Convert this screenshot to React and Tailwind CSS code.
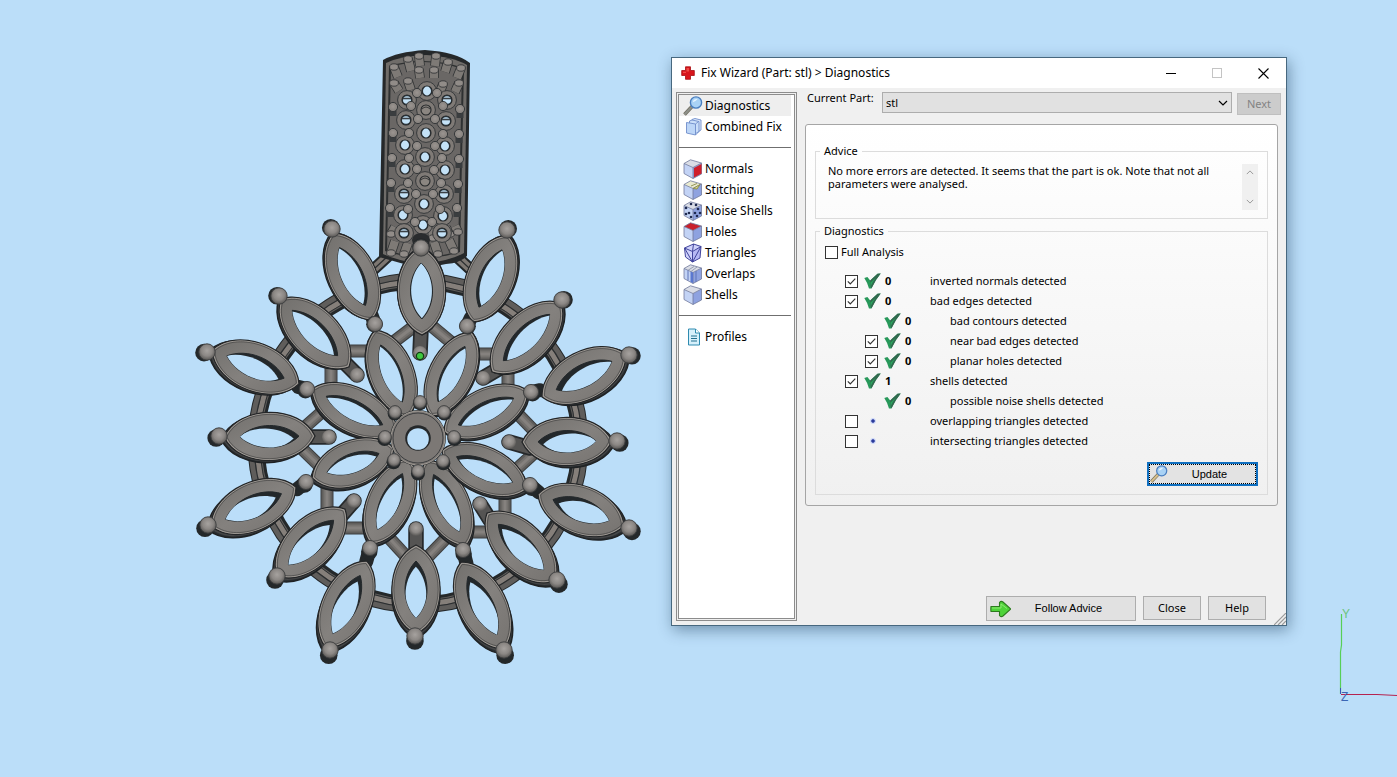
import React from "react";

const SKY = "#bbdef9";

/* ---------- 3D scene ---------- */

// [outer tip x, outer tip y, inner tip x, inner tip y]
const OUTER_PETALS = [
  [333, 233, 372, 320], [281, 299, 349, 367], [212, 350, 299, 384], [224, 437, 315, 436],
  [211, 526, 296, 487], [277, 576, 345, 509], [326, 648, 367, 561], [416, 634, 416, 545],
  [504, 649, 461, 562], [555, 581, 487, 513], [624, 526, 538, 494], [612, 441, 522, 442],
  [626, 354, 542, 397], [561, 303, 492, 372], [508, 235, 473, 322], [421, 247, 422, 335],
];
const INNER_PETALS = [
  [375, 330, 408, 417], [312, 389, 397, 432], [312, 478, 394, 448], [371, 544, 409, 459],
  [466, 546, 427, 460], [527, 489, 442, 450], [528, 391, 444, 432], [472, 332, 431, 416],
];
const TIP_BEADS = [
  [332, 229], [279, 296], [207, 352], [219, 436], [208, 525], [277, 576], [330, 650], [415, 636],
  [504, 650], [557, 580], [629, 528], [617, 441], [629, 355], [562, 300], [507, 230], [421, 248],
];
const JOINT_BEADS = [
  [375, 324], [307, 389], [306, 482], [370, 548], [463, 550], [530, 485], [531, 392], [467, 326],
];
const POSTS = [
  [357, 375, 343, 361], [354, 501, 339, 518], [416, 529, 416, 550], [480, 504, 490, 520],
  [483, 378, 500, 368], [420, 353, 421, 330], [329, 437, 310, 437], [509, 442, 530, 448],
];
const CORE_BEADS = [
  [395, 412], [420, 402], [444, 412], [454, 437], [443, 461], [418, 471], [394, 460], [385, 437],
];
const STRUTS = [
  [425, 318, 383, 350], [340, 351, 385, 351], [331, 355, 331, 396], [297, 434, 332, 403],
  [422, 318, 458, 348], [460, 354, 505, 354], [508, 355, 508, 398], [512, 408, 543, 440],
  [293, 440, 328, 474], [327, 482, 327, 522], [335, 528, 372, 528], [380, 528, 414, 565],
  [508, 477, 543, 445], [505, 488, 505, 522], [458, 532, 498, 532], [418, 567, 452, 532],
];

function lens([x1, y1, x2, y2], half, inset = 0, dx = 0, dy = 0, swell = 0.16) {
  const len = Math.hypot(x2 - x1, y2 - y1);
  const ux = (x2 - x1) / len;
  const uy = (y2 - y1) / len;
  const c = half / 0.75;
  const l = len - inset * 2;
  const at = (along, side) => {
    const t = inset + along * l;
    return `${x1 + ux * t - uy * side + dx} ${y1 + uy * t + ux * side + dy}`;
  };
  return `M${at(0, 0)}C${at(swell, c)} ${at(1 - swell, c)} ${at(1, 0)}C${at(1 - swell, -c)} ${at(swell, -c)} ${at(0, 0)}Z`;
}

function depth(x, y) {
  return [(x - 420) * 0.02, (y - 310) * 0.017];
}

function Petal({ tips, half, id }) {
  const [dx, dy] = depth((tips[0] + tips[2]) / 2, (tips[1] + tips[3]) / 2);
  const holeHalf = half - 13;
  const hole = lens(tips, holeHalf, 16, 0, 0, 0.26);
  return (
    <g>
      <path d={lens(tips, half, 0, dx, dy)} fill="#2b2f32" stroke="#1f2224" strokeWidth="1.5" />
      <path d={lens(tips, half, 0, dx / 2, dy / 2)} fill="#454647" />
      <path d={lens(tips, half)} fill="#77726e" stroke="#242628" strokeWidth="1.3" />
      <path d={lens(tips, half - 1, 1.4)} fill="url(#metal)" stroke="#aaa49e" strokeWidth="0.8" />
      <path d={lens(tips, half - 1.8, 2.8)} fill="none" stroke="#3a3a3a" strokeWidth="0.6" />
      <clipPath id={id}>
        <path d={hole} />
      </clipPath>
      <path d={hole} fill="#23282b" stroke="#23282b" strokeWidth="1" />
      <g clipPath={`url(#${id})`}>
        <path d={lens(tips, holeHalf - 0.6, 16.5, dx * 1.6, dy * 1.1, 0.26)} fill={SKY} />
      </g>
    </g>
  );
}

function Bead({ x, y, r }) {
  const [dx, dy] = depth(x, y);
  return (
    <g>
      <circle cx={x + dx * 0.7} cy={y + dy * 0.9} r={r + 0.6} fill="#24282a" />
      <circle cx={x} cy={y} r={r} fill="url(#bead)" stroke="#3c3d3e" strokeWidth="0.9" />
    </g>
  );
}

const BAIL_GEMS = [
  [427, 91, 1], [426, 110, 0], [426, 133, 1], [425, 157, 1], [425, 181, 0], [424, 204, 1], [423, 225, 1],
  [407, 100, 2], [406, 120, 2], [405, 145, 1], [405, 169, 1], [404, 194, 2], [403, 215, 1], [404, 233, 2],
  [447, 100, 2], [446, 121, 2], [445, 146, 1], [445, 170, 1], [444, 194, 2], [443, 216, 1], [442, 233, 2],
];
const BAIL_BEADS = [
  [393, 107], [393, 133], [392, 158], [391, 183], [390, 208], [460, 109], [459, 134], [459, 159], [458, 184], [457, 208],
  [418, 119], [435, 119], [409, 133], [443, 134], [417, 146], [435, 146], [409, 158], [442, 158], [417, 169], [434, 170],
  [408, 183], [441, 183], [416, 194], [433, 194], [408, 209], [440, 209], [415, 222], [432, 222], [411, 106], [443, 106],
  [417, 93], [437, 93],
];
const BAIL_PEGS = [
  [394, 67, 398, 77], [408, 59, 411, 71], [419, 56, 420, 66], [436, 56, 435, 66], [448, 62, 445, 72], [461, 68, 457, 78],
  [394, 83, 399, 91], [408, 81, 411, 90], [419, 70, 420, 78], [434, 70, 434, 78], [443, 84, 440, 92], [459, 83, 455, 92],
  [391, 234, 395, 227], [391, 253, 395, 241], [407, 237, 408, 228], [404, 254, 408, 243], [433, 238, 432, 229],
  [438, 254, 434, 242], [450, 234, 446, 228], [454, 251, 449, 240], [458, 232, 455, 226],
];

function Bail() {
  return (
    <g>
      <path d="M383 60Q397 52 425 50Q456 52 470 63L467 256Q460 263 446 264L421 269L404 264L379 257Z" fill="#25282a" />
      <path d="M386 63Q400 56 426 55Q454 57 467 65L464 253Q450 261 422 264Q398 261 383 254Z" fill="#6f6c69" />
      <path d="M389 66Q426 55 464 68L460 252Q424 264 385 251Z" fill="#2e3031" />
      <path d="M391 67Q426 56 462 69L458 251Q424 263 387 250Z" fill="#6a6765" />
      {BAIL_BEADS.slice(0, 10).map(([x, y], i) => (
        <path key={i} d={`M${x} ${y}v9`} stroke="#3a3d3f" strokeWidth="7" />
      ))}
      {BAIL_PEGS.map(([x, y, x2, y2], i) => (
        <g key={i}>
          <path d={`M${x} ${y}L${x2} ${y2}`} stroke="#2a2d2f" strokeWidth="9.6" />
          <path d={`M${x} ${y}L${x2} ${y2}`} stroke="#7e7a76" strokeWidth="8.2" />
          <ellipse cx={x} cy={y} rx="4.4" ry="3.2" fill="#918c88" stroke="#2a2c2e" strokeWidth="0.8" />
        </g>
      ))}
      {BAIL_GEMS.map(([x, y, kind], i) => (
        <g key={i}>
          <circle cx={x} cy={y} r="9.4" fill="#7f7a76" stroke="#303335" strokeWidth="0.9" />
          <circle cx={x} cy={y} r="5" fill={kind ? "#2c3a44" : "#8b8681"} stroke="#25282a" strokeWidth="1.1" />
          {kind > 0 && <ellipse cx={x} cy={y} rx="4" ry={kind === 1 ? 4.4 : 3.8} fill="#c4e2f7" />}
          {kind === 2 && <path d={`M${x - 4} ${y - 1.5}h8`} stroke="#3a4045" strokeWidth="1.6" />}
          {kind === 0 && <path d={`M${x - 4} ${y - 1}q4 -4 8 0`} stroke="#38393a" strokeWidth="1" fill="none" />}
        </g>
      ))}
      {BAIL_BEADS.map(([x, y], i) => (
        <circle key={i} cx={x} cy={y} r="4.6" fill="url(#stud)" stroke="#303335" strokeWidth="0.9" />
      ))}
      <ellipse cx="421" cy="240" rx="9" ry="7" fill="#2a2c2e" />
    </g>
  );
}

function Pendant() {
  return (
    <svg className="absolute left-[190px] top-[40px] h-[630px] w-[460px]" viewBox="190 40 460 630" role="img" aria-label="Pendant model">
      <defs>
        <linearGradient id="metal" x1="0" y1="0" x2="1" y2="1">
          <stop offset="0" stopColor="#72706d" />
          <stop offset="0.5" stopColor="#84817e" />
          <stop offset="1" stopColor="#767370" />
        </linearGradient>
        <radialGradient id="bead" cx="0.5" cy="0.42" r="0.55">
          <stop offset="0" stopColor="#a6a29f" />
          <stop offset="0.6" stopColor="#8b8784" />
          <stop offset="1" stopColor="#5d5b59" />
        </radialGradient>
        <radialGradient id="stud" cx="0.5" cy="0.45" r="0.6">
          <stop offset="0" stopColor="#9b9591" />
          <stop offset="1" stopColor="#7f7b77" />
        </radialGradient>
      </defs>

      <g fill="none">
        <circle cx="418" cy="443" r="162" stroke="#24282a" strokeWidth="17" />
        <circle cx="418" cy="443" r="163" stroke="#5f5d5b" strokeWidth="13" />
        <circle cx="418" cy="443" r="161" stroke="#857f7a" strokeWidth="5" />
        <circle cx="418" cy="443" r="164" stroke="#2b2e30" strokeWidth="1.2" />
        <circle cx="418" cy="443" r="158" stroke="#2b2e30" strokeWidth="1" />
      </g>
      {STRUTS.map(([a, b, c, d], i) => (
        <g key={i}>
          <path d={`M${a} ${b}L${c} ${d}`} stroke="#3b3d3e" strokeWidth="13" />
          <path d={`M${a} ${b}L${c} ${d}`} stroke="#605e5c" strokeWidth="11" />
          <path d={`M${a} ${b}L${c} ${d}`} stroke="#75726f" strokeWidth="7" />
          <path d={`M${a} ${b}L${c} ${d}`} stroke="#85817e" strokeWidth="3" />
        </g>
      ))}
      <path d="M388 256L362 280M454 254L482 280" stroke="#24282a" strokeWidth="12" />
      <path d="M388 256L362 280M454 254L482 280" stroke="#7d7772" strokeWidth="8" />
      <path d="M388 256L362 280M454 254L482 280" stroke="#2b2e30" strokeWidth="1.2" />
      <Bail />
      {POSTS.map(([a, b, c, d], i) => (
        <g key={i} strokeLinecap="round">
          <path d={`M${a} ${b}L${c} ${d}`} stroke="#26292b" strokeWidth="15.5" />
          <path d={`M${a} ${b}L${c} ${d}`} stroke="#555453" strokeWidth="12" />
          <circle cx={a} cy={b} r="7" fill="url(#bead)" />
        </g>
      ))}
      {JOINT_BEADS.map(([x, y], i) => (
        <path key={i} d={`M${x} ${y}L${x + (x - 418) * 0.08} ${y + (y - 410) * 0.1}`} stroke="#24282a" strokeWidth="14" strokeLinecap="round" />
      ))}
      {INNER_PETALS.map((t, i) => <Petal key={i} id={`in${i}`} tips={t} half={22.5} />)}
      {OUTER_PETALS.map((t, i) => <Petal key={i} id={`out${i}`} tips={t} half={24} />)}
      {TIP_BEADS.map(([x, y], i) => <Bead key={i} x={x} y={y} r={8.2} />)}
      {JOINT_BEADS.map(([x, y], i) => <Bead key={i} x={x} y={y} r={7.6} />)}

      <circle cx="418" cy="438" r="28" fill="#25282a" />
      <circle cx="418" cy="438" r="27" fill="#7c7875" stroke="#b3aca5" strokeWidth="0.8" />
      <circle cx="418" cy="438" r="25" fill="none" stroke="#35383a" strokeWidth="0.9" />
      <circle cx="418" cy="438" r="12.8" fill="#25282a" />
      <circle cx="418" cy="439" r="10.8" fill={SKY} />
      {CORE_BEADS.map(([x, y], i) => <Bead key={i} x={x} y={y} r={6.4} />)}
      <circle cx="420" cy="356" r="3.6" fill="#3fc83f" stroke="#123f12" strokeWidth="1.2" />
    </svg>
  );
}

function AxisGizmo() {
  return (
    <svg className="absolute bottom-[71px] right-0 h-[106px] w-[62px]" viewBox="0 0 62 106" fill="none" role="img" aria-label="Axes">
      <path d="M6.5 14V45L5.5 52V94" stroke="#57cf57" strokeWidth="1.2" />
      <path d="M6 94.5H42L62 95.5" stroke="#b5224f" />
      <path d="M5.5 88V94" stroke="#3b56b8" />
      <text x="7" y="18" fontSize="12" fill="#6cc47e" fontFamily="Liberation Sans, sans-serif">Y</text>
      <text x="6" y="101" fontSize="12" fill="#3a66b5" fontFamily="Liberation Sans, sans-serif">Z</text>
    </svg>
  );
}

/* ---------- icons ---------- */

function Cube({ right = "#8ea2e0", top = "#dadde6", left = "#c3d3f5", children }) {
  return (
    <svg className="size-5" viewBox="0 0 20 20" aria-hidden="true">
      <path d="M1 4.5L10 8.5V19.5L1 14.5Z" fill={left} />
      <path d="M10 8.5L18.5 4V15L10 19.5Z" fill={right} />
      <path d="M1 4.5L7.5 0.8L18.5 4L10 8.5Z" fill={top} />
      <path d="M1 4.5L7.5 0.8L18.5 4V15L10 19.5L1 14.5ZM1 4.5L10 8.5L18.5 4M10 8.5V19.5" fill="none" stroke="#717a9c" strokeWidth="0.8" />
      {children}
    </svg>
  );
}

function Magnifier({ className, handle = "#8d9089" }) {
  return (
    <svg className={className} viewBox="0 0 20 20" aria-hidden="true">
      <path d="M1.5 18.5L9 10.5" stroke="#6f6a5c" strokeWidth="3.6" />
      <path d="M1.5 18.5L9 10.5" stroke={handle} strokeWidth="2.2" />
      <circle cx="13" cy="6.5" r="5.6" fill="#a9d2f5" stroke="#4a7fc0" strokeWidth="1.4" />
      <path d="M9.8 6.2A3.6 3.6 0 0 1 14.5 3.2Q12 6 9.8 6.2Z" fill="#e6f4ff" />
    </svg>
  );
}

function CombinedIcon() {
  return (
    <svg className="size-5" viewBox="0 0 20 20" aria-hidden="true">
      <g stroke="#6f8dcb" strokeWidth="0.9">
        <path d="M9 2.5L12 1.5L18 3V13L15.5 14.5L9 12.5Z" fill="#dce9fb" />
        <path d="M6.5 4L9 3L16 4.5V14.5L13.5 16L6.5 14Z" fill="#cbdff9" />
        <path d="M3.5 5.5L12.5 7V18L3.5 16Z" fill="#bdd6f7" />
        <path d="M12.5 7L15.5 4.5M12.5 18L16 14.5" fill="none" />
      </g>
    </svg>
  );
}

function ProfilesIcon() {
  return (
    <svg className="size-5" viewBox="0 0 20 20" aria-hidden="true">
      <path d="M5.5 2H12.5L16.5 6V18H5.5Z" fill="#d6f0fb" stroke="#2f8bb0" />
      <path d="M12.5 2V6H16.5" fill="#fff" stroke="#2f8bb0" />
      <path d="M8 9H14M8 11.5H14M8 14H14" stroke="#23708f" strokeWidth="1.1" />
    </svg>
  );
}

const MENU = [
  { label: "Diagnostics", icon: <Magnifier className="size-5" />, active: true },
  { label: "Combined Fix", icon: <CombinedIcon /> },
  null,
  {
    label: "Normals",
    icon: (
      <Cube>
        <path d="M11 9L18.5 5V14.5L11 18.5Z" fill="#cf1f2b" />
      </Cube>
    ),
  },
  {
    label: "Stitching",
    icon: (
      <Cube top="#e9ead0">
        <path d="M8 6L14 3.5M10 8.5L17 4.5L14 9Z" stroke="#8a8a4a" fill="#d8d88c" strokeWidth="0.9" />
      </Cube>
    ),
  },
  {
    label: "Noise Shells",
    icon: (
      <Cube>
        {[[3, 7], [6, 12], [3, 13], [8, 16], [12, 12], [15, 8], [14, 15], [17, 12], [8, 3], [13, 4]].map(([x, y], i) => (
          <circle key={i} cx={x} cy={y} r="1.3" fill="#1f2a50" />
        ))}
      </Cube>
    ),
  },
  { label: "Holes", icon: <Cube top="#c9202c" /> },
  {
    label: "Triangles",
    icon: (
      <svg className="size-5" viewBox="0 0 20 20" aria-hidden="true">
        <path d="M1.5 5L10.5 1L18 3.5L17 15L9.5 19L2.5 14Z" fill="#cfd2fb" />
        <path d="M9.5 8.5L18 3.5L17 15L9.5 19Z" fill="#b6b8f4" />
        <path d="M1.5 5L10.5 1L18 3.5L17 15L9.5 19L2.5 14ZM1.5 5L9.5 8.5L18 3.5M9.5 8.5V19M1.5 5L9.5 19L18 3.5M10.5 1L9.5 8.5" fill="none" stroke="#41449c" strokeWidth="1" />
      </svg>
    ),
  },
  {
    label: "Overlaps",
    icon: (
      <Cube>
        <path d="M7.5 7.5L10 8.5V19L7.5 18Z" fill="#5b78cf" />
        <path d="M5 6.3V16.5M13 7V18" fill="none" stroke="#5f74b8" strokeWidth="1" />
        <path d="M5 6.3L11 2.5M8 7.5L14 3" stroke="#8f96ac" strokeWidth="0.9" />
      </Cube>
    ),
  },
  { label: "Shells", icon: <Cube /> },
  null,
  { label: "Profiles", icon: <ProfilesIcon /> },
];

/* ---------- controls ---------- */

function TickBox({ id, checked }) {
  return (
    <span className="relative block size-[13px] shrink-0">
      <input id={id} type="checkbox" defaultChecked={checked} className="peer block size-[13px] appearance-none border border-[#333] bg-white" />
      <svg className="pointer-events-none absolute inset-0 hidden size-[13px] peer-checked:block" viewBox="0 0 13 13" aria-hidden="true">
        <path d="M2.8 6.4L5.3 8.9L10.3 3.7" fill="none" stroke="#333" strokeWidth="1.2" />
      </svg>
    </span>
  );
}

function GreenCheck() {
  return (
    <svg className="h-4 w-[17px]" viewBox="0 0 17 16" aria-hidden="true">
      <path d="M0.3 5L3.4 4L6.2 7.6L13.5 0.8L16.7 0.5Q11.5 6.5 7.4 15.6L5 15.4Q3.3 9.5 0.3 5Z" fill="#27985a" />
      <path d="M6.2 7.6L13.5 0.8L16.7 0.5Q11.5 6.5 7.4 15.6L6.6 13Z" fill="#32694f" />
      <path d="M6.6 9.5L12 4.5Q9 8.5 6.8 13Z" fill="#2aa55c" />
    </svg>
  );
}

const RESULTS = [
  { label: "inverted normals detected", count: 0, checked: true },
  { label: "bad edges detected", count: 0, checked: true },
  { label: "bad contours detected", count: 0, nested: true },
  { label: "near bad edges detected", count: 0, checked: true, nested: true },
  { label: "planar holes detected", count: 0, checked: true, nested: true },
  { label: "shells detected", count: 1, checked: true },
  { label: "possible noise shells detected", count: 0, nested: true },
  { label: "overlapping triangles detected", checked: false },
  { label: "intersecting triangles detected", checked: false },
];

function ResultRow({ row, id }) {
  const Tag = row.checked === undefined ? "div" : "label";
  return (
    <li className={row.nested ? "pl-5" : ""}>
      <Tag className="flex h-5 items-center" {...(Tag === "label" ? { htmlFor: id } : {})}>
        {row.checked === undefined ? <span className="size-[13px]" /> : <TickBox id={id} checked={row.checked} />}
        <span className="ml-1.5 flex w-[17px] justify-center">
          {row.count === undefined ? <span className="size-1 rounded-full bg-[#2b3b9c] outline-1 outline-[#c9d6fb]" /> : <GreenCheck />}
        </span>
        <span className="ml-1 w-[45px] font-bold">{row.count}</span>
        <span>{row.label}</span>
      </Tag>
    </li>
  );
}

function Chevron({ up, className }) {
  return (
    <svg className={className} viewBox="0 0 10 6" fill="none" stroke="currentColor" strokeWidth="1.2" aria-hidden="true">
      <path d={up ? "M1 5L5 1L9 5" : "M1 1L5 5L9 1"} />
    </svg>
  );
}

function TitleBar() {
  return (
    <header className="flex h-[30px] items-center bg-white pl-[9px]">
      <svg className="size-[14px]" viewBox="0 0 14 14" aria-hidden="true">
        <path d="M4.5 0.8H9.5V4.5H13.3V9.5H9.5V13.3H4.5V9.5H0.7V4.5H4.5Z" fill="#d8151b" stroke="#a80d12" strokeWidth="0.8" />
        <path d="M5.5 2H8V5.5H5.5ZM2 5.8H5V7H2Z" fill="#ee4a45" />
      </svg>
      <h1 className="ml-1.5 flex-1 text-[12px] leading-4">Fix Wizard (Part: stl) &gt; Diagnostics</h1>
      <button type="button" aria-label="Minimize" className="flex h-[30px] w-[46px] items-center justify-center">
        <span className="h-px w-[10px] bg-black" />
      </button>
      <button type="button" aria-label="Maximize" disabled className="flex h-[30px] w-[46px] items-center justify-center">
        <span className="size-[10px] border border-[#c4c4c4]" />
      </button>
      <button type="button" aria-label="Close window" className="flex h-[30px] w-[46px] items-center justify-center">
        <svg className="size-[11px]" viewBox="0 0 11 11" stroke="#000" strokeWidth="1.1" aria-hidden="true">
          <path d="M0.5 0.5L10.5 10.5M10.5 0.5L0.5 10.5" />
        </svg>
      </button>
    </header>
  );
}

function Sidebar() {
  return (
    <nav className="flex w-[121px] shrink-0 border border-[#8c8c8c] p-px">
      <ul className="flex-1 border border-[#8c8c8c] bg-white pr-[3px] text-[12px]">
        {MENU.map((item, i) =>
          item ? (
            <li key={i}>
              <button type="button" className={`flex h-[21px] w-full items-center gap-0.5 pl-1 text-left whitespace-nowrap ${item.active ? "bg-[#eeeeee]" : ""}`}>
                {item.icon}
                <span>{item.label}</span>
              </button>
            </li>
          ) : (
            <li key={i} className="flex h-[21px] items-center">
              <hr className="w-full border-[#6f6f6f]" />
            </li>
          )
        )}
      </ul>
    </nav>
  );
}

function AdviceGroup() {
  return (
    <fieldset className="min-w-0 border border-[#dcdcdc] px-1 pb-2">
      <legend className="px-1 leading-[14px]">Advice</legend>
      <div className="flex items-start gap-7 pl-2 pr-[5px] pt-[6px]">
        <p className="flex-1 leading-[13px]">
          No more errors are detected. It seems that the part is ok. Note that not all parameters were analysed.
        </p>
        <div className="flex h-[46px] w-4 flex-col justify-between bg-[#f0f0f0] text-[#969696]">
          <button type="button" disabled aria-label="Scroll up" className="flex h-[17px] items-center justify-center">
            <Chevron up className="h-[5px] w-2" />
          </button>
          <button type="button" disabled aria-label="Scroll down" className="flex h-[17px] items-center justify-center">
            <Chevron className="h-[5px] w-2" />
          </button>
        </div>
      </div>
    </fieldset>
  );
}

function DiagnosticsGroup() {
  return (
    <fieldset className="mt-[5px] min-w-0 border border-[#dcdcdc] px-1 pb-2">
      <legend className="px-1 leading-[14px]">Diagnostics</legend>
      <label htmlFor="full" className="mt-1 ml-[5px] flex h-5 w-fit items-center gap-[3px]">
        <TickBox id="full" checked={false} />
        Full Analysis
      </label>
      <ul className="mt-[9px] pl-[25px]">
        {RESULTS.map((row, i) => <ResultRow key={i} row={row} id={`result-${i}`} />)}
      </ul>
      <div className="mt-[11px] flex justify-end pr-[5px]">
        <button type="button" className="h-6 w-[111px] border-2 border-[#0f6fc0] bg-[#e3e3e3]">
          <span className="flex h-full items-center border border-dotted border-black">
            <Magnifier className="size-[18px]" handle="#d8c08a" />
            <span className="flex-1 pl-1 pr-2 text-center font-['Liberation_Sans',sans-serif] text-[11px]">Update</span>
          </span>
        </button>
      </div>
    </fieldset>
  );
}

function Footer() {
  return (
    <footer className="mt-auto flex gap-[7px] self-end pr-5">
      <button type="button" className="flex h-[25px] w-[150px] items-center border border-[#adadad] bg-[#e1e1e1] pl-[3px]">
        <svg className="h-[18px] w-[21px]" viewBox="0 0 21 18" aria-hidden="true">
          <path d="M1 6.5Q0.6 9 1 11.5H9.5V15.5Q11 17.5 13 16L20.3 9.5Q20.6 9 20.3 8.5L13 2Q11 0.5 9.5 2.5V6.5Z" fill="#4ed33a" stroke="#2c7a1e" strokeWidth="1.1" />
          <path d="M2 8H11V4L17 8.5" fill="none" stroke="#8be870" strokeWidth="1" />
        </svg>
        <span className="flex-1 pr-[9px] text-center font-['Liberation_Sans',sans-serif] text-[11px]">Follow Advice</span>
      </button>
      <button type="button" className="h-6 w-[58px] border border-[#adadad] bg-[#e1e1e1]">Close</button>
      <button type="button" className="h-6 w-[58px] border border-[#adadad] bg-[#e1e1e1]">Help</button>
    </footer>
  );
}

function FixWizard() {
  return (
    <section className="absolute left-[671px] top-[57px] flex min-h-[569px] w-[616px] flex-col border border-[#47687f] bg-[#f0f0f0] font-['Noto_Sans','Open_Sans',sans-serif] text-[11px] text-black shadow-[2px_4px_14px_rgba(20,50,80,0.45)]">
      <TitleBar />
      <div className="flex flex-1 pb-1 pl-1 pt-1">
        <Sidebar />
        <main className="flex min-w-0 flex-1 flex-col pl-2">
          <div className="flex items-start pl-0.5 pr-[5px]">
            <label htmlFor="part" className="w-[75px] leading-3">Current Part:</label>
            <div className="relative flex-1">
              <select id="part" className="block h-[21px] w-full appearance-none border border-[#adadad] bg-[#e1e1e1] px-[3px] leading-[19px]">
                <option>stl</option>
              </select>
              <Chevron className="pointer-events-none absolute right-1 top-[8px] h-[6px] w-[10px]" />
            </div>
            <button type="button" disabled className="ml-[5px] mt-px h-[22px] w-11 border border-[#bfbfbf] bg-[#cccccc] text-[#838383]">Next</button>
          </div>
          <div className="mr-2 mt-[9px] rounded-[3px] border border-[#a5a5a5] bg-linear-to-b from-white to-[#f0f0f0] px-[9px] pb-[10px] pt-[19px]">
            <AdviceGroup />
            <DiagnosticsGroup />
          </div>
          <Footer />
        </main>
      </div>
      <svg className="absolute bottom-0 right-0 size-[12px]" viewBox="0 0 12 12" stroke="#9a9a9a" strokeWidth="1.2" aria-hidden="true">
        <path d="M0 12L12 0M4 12L12 4M8 12L12 8" />
      </svg>
    </section>
  );
}

export default function App() {
  return (
    <div className="relative min-h-screen overflow-hidden bg-[#bbdef9]">
      <Pendant />
      <AxisGizmo />
      <FixWizard />
    </div>
  );
}
